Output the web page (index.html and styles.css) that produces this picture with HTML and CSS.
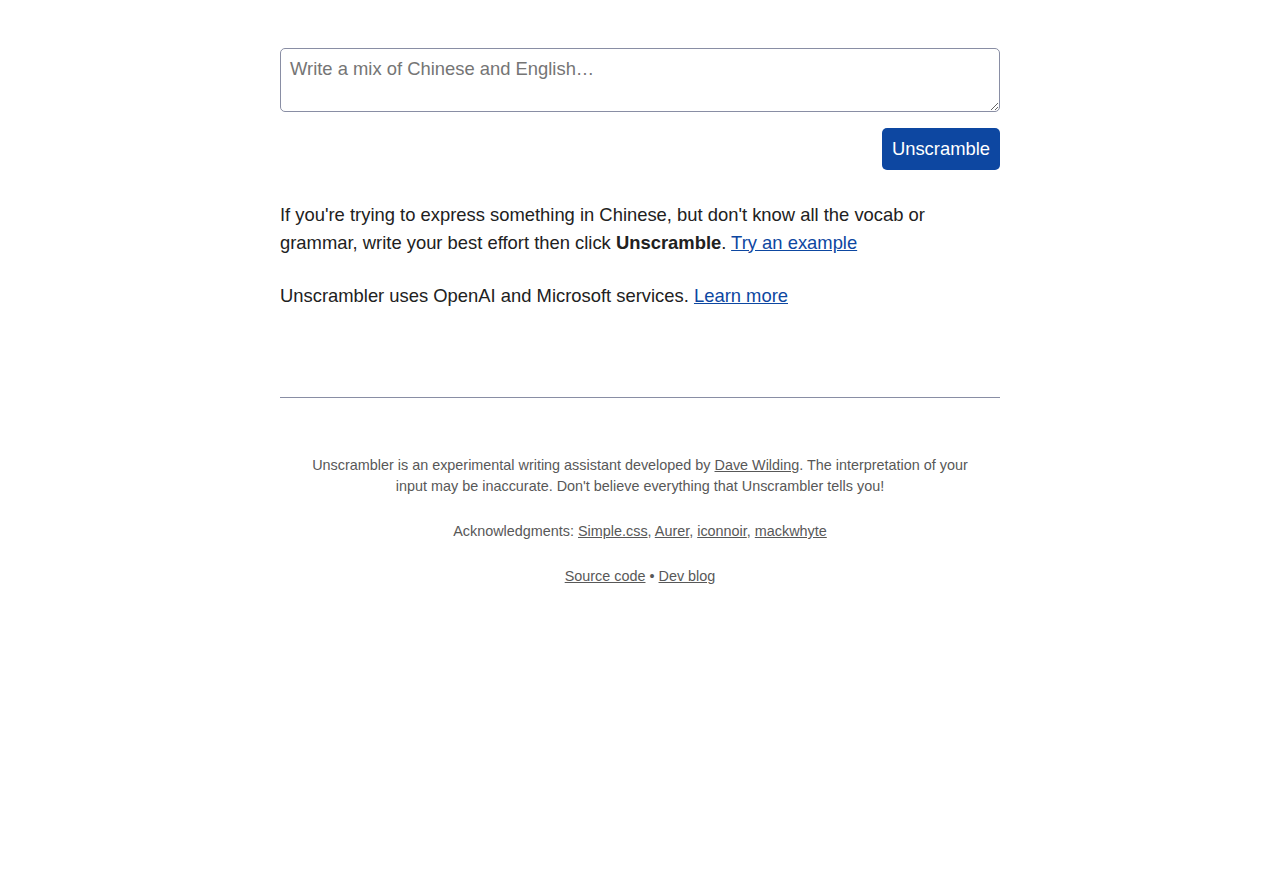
FILE: index.html
```html
<!DOCTYPE html>
<html>
<head>
    <title>Unscrambler</title>
    <meta name="viewport" content="width=device-width, initial-scale=1.0">
    <link rel="stylesheet" href="styles.css">
</head>
<body>
    <main id="container">
      <form id="unscramble-form">
          <textarea id="input" name="input" placeholder="Write a mix of Chinese and English…"></textarea>
          <div class="actions">
              <button type="submit">Unscramble</button>
          </div>
      </form>
      <p>If you're trying to express something in Chinese, but don't know all the vocab or grammar, write your best effort then click <b>Unscramble</b>. <a href="#">Try an example</a></p>
      <p>Unscrambler uses OpenAI and Microsoft services. <a href="#">Learn more</a></p>
    </main>
    <footer>
      <p>Unscrambler is an experimental writing assistant developed by <a href="#">Dave Wilding</a>. The interpretation of your input may be inaccurate. Don't believe everything that Unscrambler tells you!</p>
      <p>Acknowledgments: <a href="#">Simple.css</a>, <a href="#">Aurer</a>, <a href="#">iconnoir</a>, <a href="#">mackwhyte</a></p>
      <p><a href="#">Source code</a> • <a href="#">Dev blog</a></p>
    </footer>
</body>
</html>
```

FILE: styles.css
```css
body {
    font-family: "Liberation Sans", Arial, sans-serif;
    font-size: 18.4px;
    line-height: 1.5;
    color: #212121;
    background: #fff;
    margin: 0;
    padding: 0;
}
#container {
    width: 720px;
    margin: 0 auto;
    padding-top: 48px;
}
a {
    color: #0d47a1;
}
textarea {
    display: block;
    width: 100%;
    height: 64px;
    box-sizing: border-box;
    padding: 6px 9px;
    font-family: inherit;
    font-size: inherit;
    line-height: 1.5;
    color: #212121;
    border: 1px solid #898ea4;
    border-radius: 5px;
    margin: 0;
}
textarea::placeholder {
    color: #757575;
}
.actions {
    display: flex;
    justify-content: flex-end;
    margin-top: 16px;
}
button {
    font-family: inherit;
    font-size: inherit;
    line-height: normal;
    height: 42px;
    padding: 0 10px;
    background-color: #0d47a1;
    color: white;
    border: none;
    border-radius: 5px;
    cursor: pointer;
}
main p {
    margin: 31px 0 24px;
}
main p + p {
    margin-top: 26px;
}
footer {
    width: 720px;
    margin: 87px auto 0;
    padding: 34px 16px 24px;
    box-sizing: border-box;
    border-top: 1px solid #898ea4;
    color: #585858;
    font-size: 14.4px;
    text-align: center;
}
footer p {
    margin: 23px 0;
}
footer a {
    color: #585858;
}
```
